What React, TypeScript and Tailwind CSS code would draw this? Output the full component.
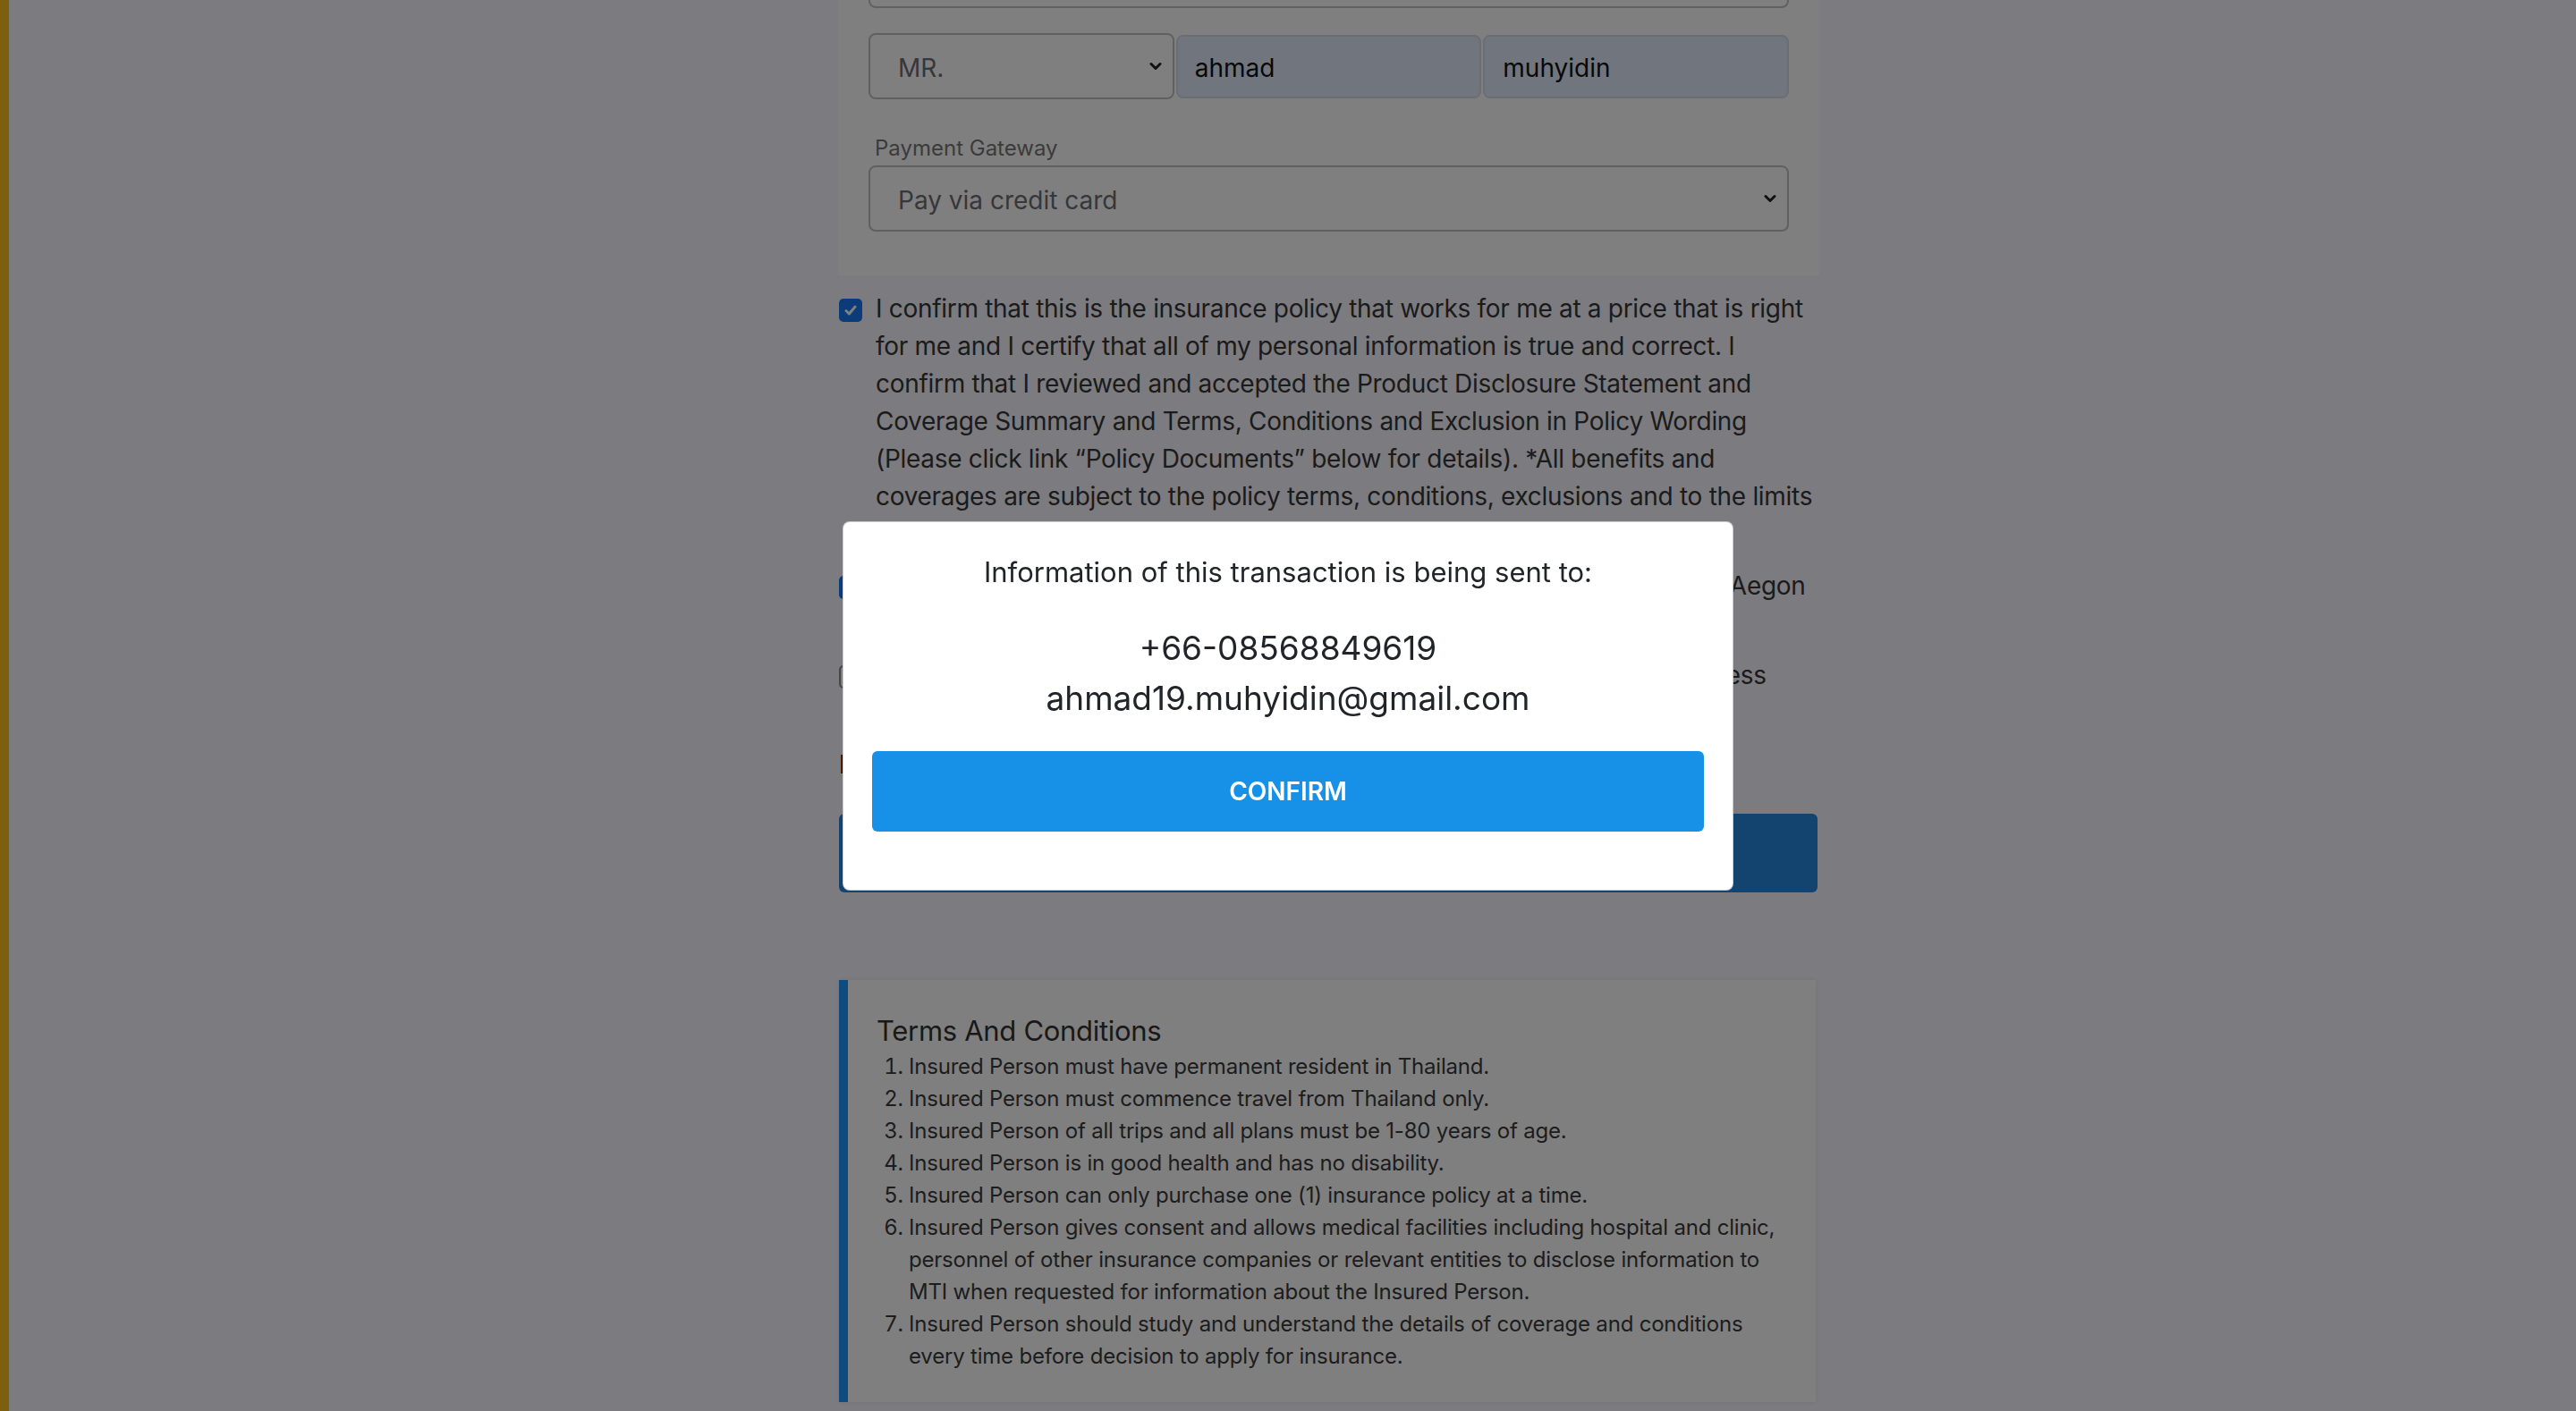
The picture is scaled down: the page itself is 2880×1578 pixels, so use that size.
import { useState } from "react";

const Chevron = ({ className }: { className?: string }) => (
  <svg viewBox="0 0 14 10" className={className} fill="none">
    <path d="M2 2.5 7 7.5l5-5" stroke="#222" strokeWidth="3" strokeLinecap="round" strokeLinejoin="round" />
  </svg>
);

const Checkbox = ({ checked }: { checked?: boolean }) =>
  checked ? (
    <span className="mt-[10px] flex h-[26px] w-[26px] shrink-0 items-center justify-center rounded-[5px] bg-[#1677f2]">
      <svg viewBox="0 0 16 16" className="h-[18px] w-[18px]" fill="none">
        <path d="M3.5 8.5 6.5 11.5 12.5 4.5" stroke="#fff" strokeWidth="2.6" strokeLinecap="round" strokeLinejoin="round" />
      </svg>
    </span>
  ) : (
    <span className="mt-[10px] h-[26px] w-[26px] shrink-0 rounded-[5px] border-2 border-[#8a8a8e] bg-white" />
  );

const terms = [
  "Insured Person must have permanent resident in Thailand.",
  "Insured Person must commence travel from Thailand only.",
  "Insured Person of all trips and all plans must be 1-80 years of age.",
  "Insured Person is in good health and has no disability.",
  "Insured Person can only purchase one (1) insurance policy at a time.",
  "Insured Person gives consent and allows medical facilities including hospital and clinic, personnel of other insurance companies or relevant entities to disclose information to MTI when requested for information about the Insured Person.",
  "Insured Person should study and understand the details of coverage and conditions every time before decision to apply for insurance.",
];

export default function App() {
  const [open, setOpen] = useState(true);

  return (
    <div className="relative flex min-h-screen bg-[#f9f7ff] font-['Inter',sans-serif] text-[#363636]">
      <div className="w-[10px] shrink-0 bg-[#fdbd1f]" />
      <main className="ml-[927px] w-[1097px] pb-[10px]">
        <section className="bg-white px-[34px] pb-[49px]">
          <div className="h-[9px] rounded-b-[8px] border-x-2 border-b-2 border-[#c2c2c6]" />
          <div className="mt-[28px] grid grid-cols-3 items-center gap-[2px]">
            <div className="flex h-[74px] items-center justify-between rounded-[8px] border-2 border-[#c0c1c5] bg-white pl-[31px] pr-[12px] text-[28px] text-[#6c6f74]">
              <span className="pt-[3px]">MR.</span>
              <Chevron className="h-[10px] w-[14px]" />
            </div>
            <input
              readOnly
              value="ahmad"
              className="h-[71px] rounded-[8px] border-2 border-[#d4dbe8] bg-[#e2eafa] px-[19px] pt-[3px] text-[28px] text-[#111] outline-none"
            />
            <input
              readOnly
              value="muhyidin"
              className="h-[71px] rounded-[8px] border-2 border-[#d4dbe8] bg-[#e2eafa] px-[20px] pt-[3px] text-[28px] text-[#111] outline-none"
            />
          </div>
          <label className="mt-[37px] block pl-[7px] text-[24px] leading-[36px] text-[#777]">Payment Gateway</label>
          <div className="mt-[1px] flex h-[74px] items-center justify-between rounded-[8px] border-2 border-[#c0c1c5] bg-white pl-[31px] pr-[12px] text-[28px] text-[#6c6f74]">
            <span className="pt-[4px]">Pay via credit card</span>
            <Chevron className="h-[10px] w-[14px]" />
          </div>
        </section>

        <div className="mt-[16px] flex flex-col gap-[16px] pl-[1px] text-[28px] leading-[42px] tracking-[-0.3px]">
          <div className="flex gap-[15px]">
            <Checkbox checked />
            <p>
              I confirm that this is the insurance policy that works for me at a price that is right for me and I certify that all of my personal information is true and correct. I confirm that I reviewed and accepted the Product Disclosure Statement and Coverage Summary and Terms, Conditions and Exclusion in Policy Wording (Please click link “Policy Documents” below for details). *All benefits and coverages are subject to the policy terms, conditions, exclusions and to the limits of the plan.
            </p>
          </div>
          <div className="flex gap-[15px]">
            <Checkbox checked />
            <p>
              I agree to the collection, use and transfer of my personal data by MTI and Aegon
              <br />
              for the purpose of this insurance.
            </p>
          </div>
          <div className="flex gap-[15px]">
            <Checkbox />
            <p>
              I would like to receive my policy documents by post to my registered address
              <br />
              instead of by email.
            </p>
          </div>
          <a className="font-medium text-[#222]">Policy Documents</a>
        </div>

        <button className="mt-[34px] ml-[1px] h-[88px] w-[1094px] rounded-[6px] bg-[#2488de] text-[28px] font-semibold text-white">
          PAY NOW
        </button>

        <section className="mt-[98px] ml-[1px] w-[1092px] border-l-[10px] border-[#1f96fc] bg-white pb-[33px] pl-[32px] pr-[20px] pt-[38px] shadow-[0_0_6px_rgba(0,0,0,0.08)]">
          <h3 className="text-[31px] leading-[38px] tracking-[-0.3px] text-[#333]">Terms And Conditions</h3>
          <ol className="mt-[3px] list-decimal pl-[36px] text-[24px] leading-[36px] tracking-[-0.2px] text-[#3a3a3a]">
            {terms.map((t) => (
              <li key={t}>{t}</li>
            ))}
          </ol>
        </section>
      </main>

      {open && (
        <div className="fixed inset-0 flex items-center justify-center bg-black/50">
          <div className="w-[996px] rounded-[8px] border border-black/20 bg-white px-[32px] pb-[65px] pt-[36px] text-center text-[#212529]">
            <p className="text-[31px] leading-[40px]">Information of this transaction is being sent to:</p>
            <p className="mt-[37px] text-[37px] leading-[56px]">+66-08568849619</p>
            <p className="text-[37px] leading-[56px]">ahmad19.muhyidin@gmail.com</p>
            <button
              onClick={() => setOpen(false)}
              className="mt-[31px] h-[90px] w-full rounded-[6px] bg-[#1791e8] text-[28px] font-semibold text-white"
            >
              CONFIRM
            </button>
          </div>
        </div>
      )}
    </div>
  );
}
